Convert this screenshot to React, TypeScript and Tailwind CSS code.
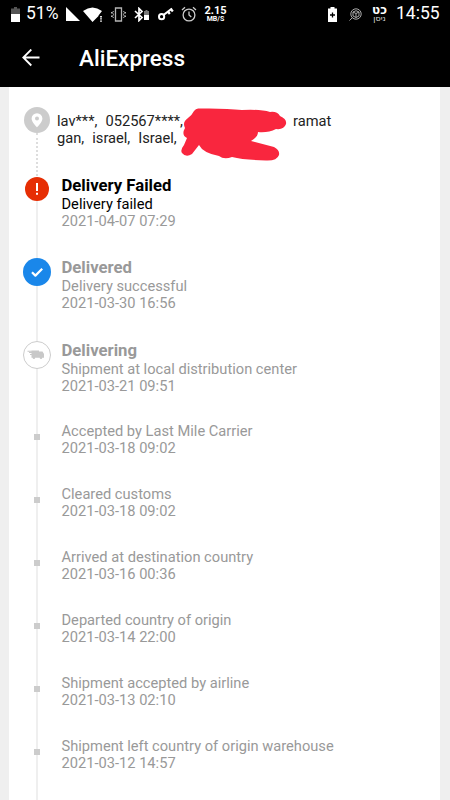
import clsx from "clsx";
import type { ReactNode } from "react";

// Types
type StepKind = "failed" | "done" | "current" | "minor";

interface Step {
  kind: StepKind;
  title?: string;
  text: string;
  date: string;
}

// Constants
const STEPS: Step[] = [
  { kind: "failed", title: "Delivery Failed", text: "Delivery failed", date: "2021-04-07 07:29" },
  { kind: "done", title: "Delivered", text: "Delivery successful", date: "2021-03-30 16:56" },
  { kind: "current", title: "Delivering", text: "Shipment at local distribution center", date: "2021-03-21 09:51" },
  { kind: "minor", text: "Accepted by Last Mile Carrier", date: "2021-03-18 09:02" },
  { kind: "minor", text: "Cleared customs", date: "2021-03-18 09:02" },
  { kind: "minor", text: "Arrived at destination country", date: "2021-03-16 00:36" },
  { kind: "minor", text: "Departed country of origin", date: "2021-03-14 22:00" },
  { kind: "minor", text: "Shipment accepted by airline", date: "2021-03-13 02:10" },
  { kind: "minor", text: "Shipment left country of origin warehouse", date: "2021-03-12 14:57" },
];

const StatusBar = () => (
  <div className="flex h-[28px] items-center overflow-hidden whitespace-nowrap pl-[11px] text-white">
    {/* battery level */}
    <svg className="h-[15px] w-[9px] shrink-0" viewBox="0 0 9 15">
      <path d="M3 0h3v1.5h3V7H0V1.5h3z" fill="#555" />
      <path d="M0 7h9v8H0z" fill="#fff" />
    </svg>
    <span className="ml-[6px] w-[33px] text-[17.5px] leading-none">51%</span>
    {/* mobile signal */}
    <svg className="ml-[7px] h-[14px] w-[14px] shrink-0" viewBox="0 0 14 14">
      <path d="M0 0v14h14z" fill="#fff" />
    </svg>
    {/* wifi */}
    <svg className="ml-[3px] h-[15px] w-[20px] shrink-0" viewBox="0 0 20 15">
      <path d="M0 4Q9.500-3 19 4L15.500 8.500V9L9.500 15z" fill="#fff" />
      <path d="M17 9h2v1.500h-2zM17 11.300h2v1.300h-2zM17 13.400h2v1.300h-2z" fill="#ddd" />
    </svg>
    {/* vibrate */}
    <svg className="ml-[8px] h-[15px] w-[15px] shrink-0" viewBox="0 0 15 15" fill="none" stroke="#b5b5b5">
      <path d="M4.500 1h6v13h-6z" strokeWidth="1.300" />
      <path d="M2.500 4l-1 1.700 1 1.800-1 1.800 1 1.700M.5 5v1.500M.5 8.500V10M12.500 4l1 1.700-1 1.800 1 1.800-1 1.700M14.500 5v1.500M14.500 8.500V10" />
    </svg>
    {/* bluetooth with device battery */}
    <svg className="ml-[8px] h-[15px] w-[16px] shrink-0" viewBox="0 0 16 15">
      <path d="M1 4l7 6.500L5 13.500v-12L8 4.500 1 11" fill="none" stroke="#fff" strokeWidth="1.700" />
      <path d="M11.500 3h2v1H15v4h-5V4h1.500z" fill="#777" />
      <path d="M10 8h5v5h-5z" fill="#fff" />
    </svg>
    {/* vpn key */}
    <svg className="ml-[8px] h-[14px] w-[16px] shrink-0" viewBox="0 0 16 14" fill="none" stroke="#fff">
      <circle cx="3.600" cy="9.700" r="2.600" strokeWidth="2" />
      <path d="M5.500 8L14 1.500M10 4.500l1.800 2.500M13 2l1.800 2.500" strokeWidth="2.200" />
    </svg>
    {/* alarm */}
    <svg className="ml-[7px] h-[16px] w-[16px] shrink-0" viewBox="0 0 16 16" fill="none" stroke="#ccc" strokeWidth="1.300">
      <circle cx="8" cy="9" r="5.900" />
      <path d="M8 5.500V9l2.300 2M1 4l3-2.700M15 4l-3-2.700" />
    </svg>
    <div className="ml-[8px] flex w-[21px] flex-col items-center font-bold">
      <span className="text-[11px] leading-[9px]">2.15</span>
      <span className="text-[7px] leading-[8px]">MB/S</span>
    </div>
    {/* charging battery */}
    <svg className="ml-[102px] h-[15px] w-[9px] shrink-0" viewBox="0 0 9 15">
      <path d="M2.500 0h4v1.500H9V15H0V1.500h2.500z" fill="#fff" />
      <path d="M4.500 5.500v5M2 8h5" stroke="#000" strokeWidth="1.300" />
    </svg>
    {/* parcel tracker */}
    <svg className="ml-[12px] h-[13px] w-[13px] shrink-0" viewBox="0 0 13 13" fill="none" stroke="#aaa">
      <circle cx="7" cy="6" r="5.200" />
      <path d="M3.500 9.500L.5 12.500M4 4l3-1.300L10 4v4L7 9.500 4 8zM4 4l3 1.500L10 4M7 5.500v4" />
    </svg>
    <div dir="rtl" className="ml-[9px] flex w-[17px] flex-col items-center font-['DejaVu_Sans',sans-serif]">
      <span className="text-[12px] font-bold leading-[8px]">כט</span>
      <span className="text-[8px] leading-[9px] text-[#ddd]">ניסן</span>
    </div>
    <span className="ml-[8px] text-[17.500px] leading-none">14:55</span>
  </div>
);

const Header = () => (
  <header className="flex h-[59px] items-center bg-black pl-[22px] text-white">
    <svg className="h-[18px] w-[18px]" viewBox="0 0 18 18" fill="none" stroke="#fff" strokeWidth="1.800">
      <path d="M17.500 8.500H1.500M9.300.5L1.300 8.500l8 8" />
    </svg>
    <h1 className="ml-[39px] mt-[2px] text-[22.500px] font-medium leading-none">AliExpress</h1>
  </header>
);

// Vertical piece of the rail, fills whatever height is left when no size is given
const Line = ({ className = "flex-1" }: { className?: string }) => (
  <div className={clsx("w-[2px] shrink-0 bg-[#efefef]", className)} />
);

const Marker = ({ kind }: { kind: StepKind }) => {
  if (kind === "failed") {
    return (
      <svg className="h-[24px] w-[24px] shrink-0" viewBox="0 0 24 24">
        <circle cx="12" cy="12" r="12" fill="#e62e04" />
        <path d="M12 6v8M12 15.700v2" stroke="#fff" strokeWidth="2" />
      </svg>
    );
  }
  if (kind === "done") {
    return (
      <svg className="h-[28px] w-[28px] shrink-0" viewBox="0 0 28 28">
        <circle cx="14" cy="14" r="14" fill="#1a87ea" />
        <path d="M9 14.200l3.400 3.400 6.800-6.800" fill="none" stroke="#fff" strokeWidth="2.200" strokeLinejoin="round" />
      </svg>
    );
  }
  if (kind === "current") {
    return (
      <svg className="h-[28px] w-[28px] shrink-0" viewBox="0 0 28 28">
        <circle cx="14" cy="14" r="13.500" fill="#fff" stroke="#ccc" />
        <g fill="#c8c8c8">
          <path d="M8.500 9.500H16v1h3.500l1.500 2.500v3.700H8.500V14H7v-1h1.500v-1H6v-1h2.500zM4.500 9.700h4v1h-4z" />
          <circle cx="10.900" cy="16.700" r="1.300" />
          <circle cx="18" cy="16.700" r="1.300" />
        </g>
      </svg>
    );
  }
  return <div className="h-[6px] w-[6px] shrink-0 bg-[#ccc]" />;
};

const Row = ({ rail, children, className }: { rail: ReactNode; children: ReactNode; className?: string }) => (
  <div className={clsx("flex shrink-0 pl-[14px]", className)}>
    <div className="flex w-[28px] shrink-0 flex-col items-center">{rail}</div>
    {children}
  </div>
);

const StepRow = ({ step }: { step: Step }) => {
  const failed = step.kind === "failed";
  return (
    <Row
      className={clsx(failed && "h-[82px]", step.kind === "done" && "h-[83px]", step.kind === "current" && "h-[82px]", step.kind === "minor" && "h-[63px]")}
      rail={
        <>
          {failed && <div className="h-px" />}
          {step.kind === "minor" && <Line className="h-[11px]" />}
          <Marker kind={step.kind} />
          <Line />
        </>
      }
    >
      <div className="ml-[10.500px] whitespace-nowrap text-[14.660px] leading-[17px] text-[#999]">
        {step.title && (
          <h2 className={clsx("mb-px text-[16.700px] font-bold leading-[19px]", failed && "text-black")}>{step.title}</h2>
        )}
        <p className={clsx(failed && "text-black")}>{step.text}</p>
        <p>{step.date}</p>
      </div>
    </Row>
  );
};

const AddressRow = () => (
  <Row
    className="relative h-[89px] pt-[20px]"
    rail={
      <>
        <svg className="h-[26px] w-[26px] shrink-0" viewBox="0 0 26 26">
          <circle cx="13" cy="13" r="13" fill="#ccc" />
          <path d="M13 6.200a5.400 5.400 0 0 0-5.400 5.400c0 3.800 5.400 8.800 5.400 8.800s5.400-5 5.400-8.800A5.400 5.400 0 0 0 13 6.200zm0 3.400a2 2 0 1 1 0 4 2 2 0 0 1 0-4z" fill="#fff" fillRule="evenodd" />
        </svg>
        <div className="flex-1 border-l-2 border-dotted border-[#ddd]" />
      </>
    }
  >
    <div className="ml-[6px] mt-[6px] whitespace-pre text-[14.660px] leading-[17px] text-[#222] [word-spacing:0.400px]">
      <div className="flex">
        <p className="w-[236px]">{"lav***,  052567****,"}</p>
        <p>ramat</p>
      </div>
      <p>{"gan,  israel,  Israel,"}</p>
    </div>
    {/* marker scribble over the private part of the address */}
    <svg className="absolute left-[171px] top-[19px] h-[56px] w-[110px]" viewBox="180 106 110 56">
      <path
        d="M199 108.500Q225 108 242 110Q260 109 270 112Q277 111 280 116Q287 119 286 124Q284 130 276 129Q268 133 258 132Q258 137 251 141L274 147Q280 150 279 155Q277 161 266 160.500Q244 160 232 157Q224 160 219 156Q203 153 199 145L192 154Q186 158 182 153Q180 150 184 145L187 138Q181 135 185 128Q182 122 188 118Q192 115 194 111Q196 108 199 108.500Z"
        fill="#f9263e"
      />
    </svg>
  </Row>
);

export default function App() {
  return (
    <div className="flex h-[800px] w-[450px] flex-col overflow-hidden bg-[#efefef] font-[Roboto,sans-serif]">
      <div className="shrink-0 bg-black">
        <StatusBar />
        <Header />
      </div>
      <main className="ml-[9px] flex w-[431px] flex-1 flex-col overflow-hidden bg-white">
        <AddressRow />
        {STEPS.map((step) => (
          <StepRow key={step.text} step={step} />
        ))}
      </main>
    </div>
  );
}
